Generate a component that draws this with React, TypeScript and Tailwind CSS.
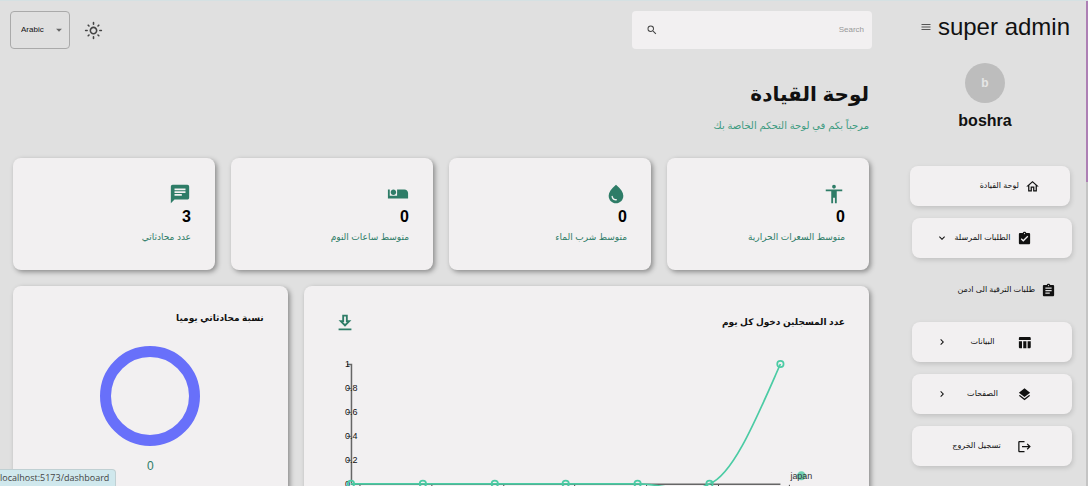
import type { ReactNode } from "react";
import {
  MdOutlineLightMode, MdSearch, MdMenu, MdOutlineHome, MdAssignmentTurnedIn, MdAssignment, MdTableChart,
  MdLayers, MdLogout, MdExpandMore, MdChevronRight, MdChat, MdAirlineSeatIndividualSuite,
  MdAccessibility, MdArrowDropDown,
} from "react-icons/md";

function DropIcon() {
  return (
    <svg viewBox="0 0 24 24" className="size-[22px]" fill="currentColor" fillRule="evenodd">
      <path d="M12 2c-5.33 4.55-8 8.48-8 11.8 0 4.98 3.8 8.2 8 8.2s8-3.22 8-8.2c0-3.32-2.67-7.25-8-11.8zM7.83 14c.37 0 .67.26.74.62.41 2.22 2.28 2.98 3.64 2.87.43-.02.79.32.79.75 0 .4-.32.73-.72.75-2.13.13-4.62-1.09-5.19-4.12-.08-.45.28-.87.74-.87z" />
    </svg>
  );
}

const stats = [
  { icon: <MdAccessibility />, value: "0", label: "متوسط السعرات الحرارية" },
  { icon: <DropIcon />, value: "0", label: "متوسط شرب الماء" },
  { icon: <MdAirlineSeatIndividualSuite />, value: "0", label: "متوسط ساعات النوم" },
  { icon: <MdChat />, value: "3", label: "عدد محادثاتي" },
];

function Stat({ icon, value, label }: { icon: ReactNode; value: string; label: string }) {
  return (
    <article className="flex h-28 flex-col items-start justify-center rounded-lg bg-[#f2f0f1] px-6 shadow-[2px_2px_5px_rgba(0,0,0,0.38)]">
      <span className="text-[22px] text-[#2e7c67]">{icon}</span>
      <strong className="text-base leading-6 text-black">{value}</strong>
      <span className="text-[9px] leading-4 whitespace-nowrap text-[#2e7c67]">{label}</span>
    </article>
  );
}

function NavItem({ icon, label, trailing }: { icon: ReactNode; label: string; trailing?: ReactNode }) {
  return (
    <a href="#" className="flex h-10 items-center rounded-lg bg-[#f2f0f1] pr-10 pl-6 shadow-[1px_2px_5px_rgba(0,0,0,0.14)]">
      <span className="text-[15px]">{icon}</span>
      <span className="flex-1 text-center text-[8px] whitespace-nowrap">{label}</span>
      {trailing && <span className="text-xs">{trailing}</span>}
    </a>
  );
}

const pointXs = [23, 95, 167, 238, 310, 382, 453];
const yLabels = ["1", "0.8", "0.6", "0.4", "0.2", "0"];

function LineChart() {
  return (
    <svg viewBox="0 0 518 180" className="w-full overflow-visible" direction="ltr" role="img" aria-label="عدد المسجلين دخول كل يوم">
      <path d="M19 10.5H23.5V130.5H453" fill="none" stroke="#666" strokeWidth="1.5" />
      {[34, 58, 82, 106].map((y) => (
        <path key={y} d={`M19 ${y + 0.5}h4`} stroke="#666" />
      ))}
      {pointXs.map((x) => (
        <path key={x} d={`M${x + 9} 131v6`} stroke="#444" />
      ))}
      {yLabels.map((t, i) => (
        <text key={t} x="17" y={13 + i * 24} fontSize="9" fill="#111">{t}</text>
      ))}
      <path d="M23 130H310C340 130 359 143 382 130C406 121 430 62 453 10" fill="none" stroke="#4bcba4" strokeWidth="1.7" />
      {pointXs.map((x, i) => (
        <circle key={x} cx={x} cy={i === 6 ? 10 : 130} r="3.2" fill="none" stroke="#4bcba4" strokeWidth="1.7" />
      ))}
      <circle cx="474" cy="122" r="4.5" fill="#6fd1b3" />
      <text x="463" y="125" fontSize="9" fill="#333">japan</text>
    </svg>
  );
}

export default function App() {
  return (
    <div dir="rtl" className="flex h-screen overflow-hidden border-t border-[#d5e1e3] bg-[#e0e0e0] font-['Liberation_Sans','DejaVu_Sans',sans-serif] text-[#111]">
      <div className="w-0.5 shrink-0 bg-[#c4c4c4]">
        <div className="h-[181px] bg-[#ad7fb4]" />
      </div>
      <aside className="w-[204px] shrink-0">
        <div className="flex items-center gap-1.5 pt-1 pr-4">
          <h2 className="text-2xl leading-11" dir="ltr">super admin</h2>
          <button aria-label="القائمة" className="text-xs text-[#555]"><MdMenu /></button>
        </div>
        <div className="flex flex-col items-center pt-3.5 pl-0.5">
          <span className="flex size-10 items-center justify-center rounded-full bg-[#bdbdbd] text-xs font-bold text-[#e6e6e6]">b</span>
          <p className="pt-1 text-base leading-7 font-bold">boshra</p>
        </div>
        <nav className="mt-[31px] flex flex-col gap-3 pr-3.5 pl-[30px]">
          <a href="#" className="mr-0.5 -ml-0.5 flex h-10 items-center gap-1.5 rounded-lg bg-[#f2f0f1] pr-[30px] text-[8px] shadow-[1px_2px_5px_rgba(0,0,0,0.14)]">
            <MdOutlineHome className="text-[15px]" />لوحة القيادة
          </a>
          <NavItem icon={<MdAssignmentTurnedIn />} label="الطلبات المرسلة" trailing={<MdExpandMore />} />
          <a href="#" className="flex h-10 items-center gap-1.5 pr-4 text-[8px]">
            <MdAssignment className="text-[15px]" />طلبات الترقية الى ادمن
          </a>
          <NavItem icon={<MdTableChart />} label="البيانات" trailing={<MdChevronRight />} />
          <NavItem icon={<MdLayers />} label="الصفحات" trailing={<MdChevronRight />} />
          <NavItem icon={<MdLogout />} label="تسجيل الخروج" />
        </nav>
      </aside>
      <main className="min-w-0 flex-1">
        <header className="flex items-center justify-between px-2.5 pt-2.5">
          <label className="flex h-[38px] w-60 items-center rounded-sm bg-[#f2f0f1] px-2">
            <input aria-label="Search" placeholder="Search" className="min-w-0 flex-1 bg-transparent text-[8px] outline-none placeholder:text-[#999]" />
            <MdSearch className="ml-1.5 text-xs text-[#444]" />
          </label>
          <div className="flex items-center gap-3.5">
            <button aria-label="الوضع الفاتح" className="text-[19px] text-[#444]"><MdOutlineLightMode /></button>
            <div dir="ltr" className="relative flex items-center">
              <select aria-label="Language" className="h-[38px] w-[60px] appearance-none rounded-sm border border-[#aaa] px-2.5 text-[8px]">
                <option>Arabic</option>
              </select>
              <MdArrowDropDown className="pointer-events-none absolute right-1 text-sm text-[#666]" />
            </div>
          </div>
        </header>
        <section className="px-[13px]">
          <h1 className="pt-[25px] text-xl leading-10 font-bold">لوحة القيادة</h1>
          <p className="text-[10px] leading-6 text-[#3d9b80]">مرحباً بكم في لوحة التحكم الخاصة بك</p>
          <div className="mt-5 grid grid-cols-12 gap-4">
            {stats.map((s) => (
              <div key={s.label} className="col-span-3"><Stat {...s} /></div>
            ))}
            <article className="col-span-8 h-80 rounded-lg bg-[#f2f0f1] px-6 pt-[26px] shadow-[2px_2px_5px_rgba(0,0,0,0.38)]">
              <div className="flex items-center justify-between pl-1.5">
                <h3 className="text-[9px] font-bold">عدد المسجلين دخول كل يوم</h3>
                <button aria-label="تنزيل" className="text-[#2e7c67]">
                  <svg viewBox="0 0 24 24" className="size-[22px]" fill="currentColor"><path d="M19 9h-4V3H9v6H5l7 7 7-7zm-8 2V5h2v6h1.17L12 13.17 9.83 11H11zm-6 7h14v2H5z" /></svg>
                </button>
              </div>
              <div className="pt-5"><LineChart /></div>
            </article>
            <article className="col-span-4 h-80 rounded-lg bg-[#f2f0f1] px-6 pt-6 shadow-[2px_2px_5px_rgba(0,0,0,0.38)]">
              <h3 className="text-[9px] leading-4 font-bold">نسبة محادثاتي يوميا</h3>
              <div className="flex flex-col items-center pt-5">
                <svg viewBox="0 0 100 100" className="size-[100px]"><circle cx="50" cy="50" r="44.5" fill="none" stroke="#6870fa" strokeWidth="11" /></svg>
                <span className="pt-2 text-xs leading-6 text-[#2e7c67]">0</span>
              </div>
            </article>
          </div>
        </section>
      </main>
      <div dir="ltr" className="fixed bottom-0 left-0 rounded-tr-sm border-t border-r border-[#c0d0d3] bg-[#d0e8ed] pr-1.5 font-['Open_Sans',sans-serif] text-[9px] leading-4 text-[#444]">localhost:5173/dashboard</div>
    </div>
  );
}
